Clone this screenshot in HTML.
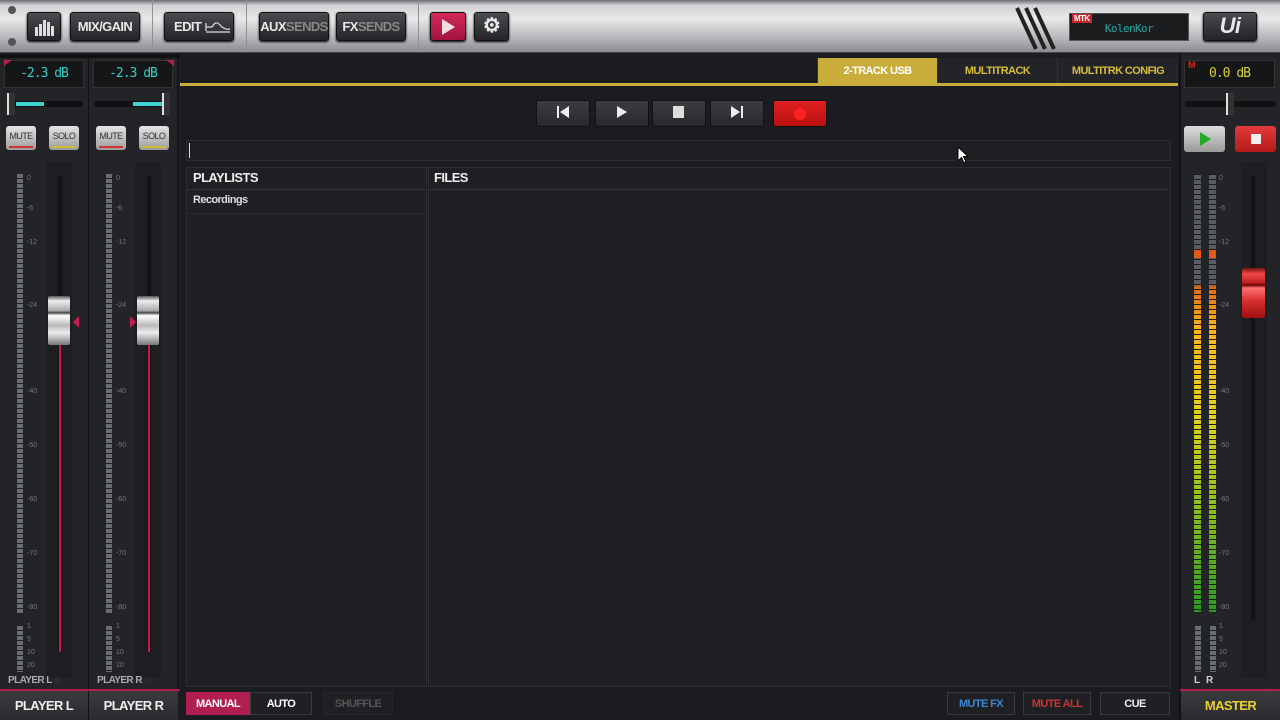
<!DOCTYPE html><html><head><meta charset="utf-8"><style>
*{margin:0;padding:0;box-sizing:border-box}
body{width:1280px;height:720px;background:#1b1c1f;position:relative;overflow:hidden;font-family:"Liberation Sans",sans-serif;font-weight:bold;letter-spacing:-0.6px}
.a{position:absolute}
.top{left:0;top:0;width:1280px;height:53px;background:linear-gradient(#6a6c70 0,#cfd1d3 10%,#e8e9ea 35%,#b9bbbe 70%,#8b8d90 100%);border-bottom:1px solid #444}
.tb{position:absolute;top:12px;height:29px;border-radius:3px;background:linear-gradient(#4a4b4e,#232427);border:1px solid #111;box-shadow:0 1px 2px #000;color:#e8e8e8;font-size:13px;text-align:center;line-height:27px;white-space:nowrap}
.sep{position:absolute;top:0;width:1px;height:52px;background:#8f9194}
.strip{top:54px;height:666px;background:#232428;border-right:1px solid #111}
.db{height:28px;top:6px;background:#151617;border:1px solid #333;color:#33d0c8;font-family:"DejaVu Sans Mono",monospace;font-weight:normal;font-size:13px;text-align:center;line-height:26px;letter-spacing:-1px}
.ms{top:72px;width:30px;height:24px;border-radius:3px;background:linear-gradient(#e4e4e4,#9c9c9c);color:#333;font-size:9px;font-weight:normal;text-align:center;line-height:20px}
.meter{width:6px;background:repeating-linear-gradient(#6a6d70 0 4px,#222 4px 5px)}
.lab{font-size:7px;color:#777;font-weight:normal;letter-spacing:0}
.cap{width:22px;height:49px;border-radius:2px;background:linear-gradient(#555 0,#eee 10%,#aaa 30%,#444 34%,#fff 40%,#bbb 60%,#eee 75%,#777 100%)}
.tr{width:54px;height:27px;top:100px;border-radius:2px;background:linear-gradient(#3c3d40,#28292c);border:1px solid #111;color:#eee;text-align:center;line-height:25px;font-size:14px}
.tab{top:58px;height:26px;color:#d8bc3b;font-size:11px;text-align:center;line-height:26px;background:#232427;border-left:1px solid #333}
.bb{top:692px;height:23px;font-size:11px;text-align:center;line-height:23px;border:1px solid #3a3b3e;background:#1f2023}
</style></head><body>
<div class="a top">
 <div class="a" style="left:8px;top:6px;width:8px;height:8px;border-radius:50%;background:#555"></div>
 <div class="a" style="left:8px;top:38px;width:8px;height:8px;border-radius:50%;background:#555"></div>
 <div class="tb" style="left:27px;width:34px"><svg width="22" height="20" viewBox="0 0 22 20" style="margin-top:4px"><g fill="#ddd"><rect x="2" y="10" width="3" height="9"/><rect x="6" y="7" width="3" height="12"/><rect x="10" y="3" width="3" height="16"/><rect x="14" y="5" width="3" height="14"/><rect x="18" y="9" width="3" height="10"/></g></svg></div>
 <div class="tb" style="left:70px;width:70px">MIX/GAIN</div>
 <div class="sep" style="left:152px"></div>
 <div class="tb" style="left:164px;width:70px;text-align:left;padding-left:9px">EDIT <svg width="28" height="14" style="vertical-align:-2px"><path d="M2 12L2 4M2 8L8 8Q12 1 16 6Q20 11 26 10M2 13L26 13" stroke="#ddd" stroke-width="1.2" fill="none"/></svg></div>
 <div class="sep" style="left:246px"></div>
 <div class="tb" style="left:259px;width:70px">AUX<span style="color:#888">SENDS</span></div>
 <div class="tb" style="left:336px;width:70px">FX<span style="color:#888">SENDS</span></div>
 <div class="sep" style="left:418px"></div>
 <div class="tb" style="left:430px;width:36px;background:linear-gradient(#d22a5a,#a3143e)"><svg width="16" height="18" viewBox="0 0 16 18" style="margin-top:5px"><path d="M2 1L15 9L2 17Z" fill="#f2dde3"/></svg></div>
 <div class="tb" style="left:474px;width:35px;font-size:20px">⚙</div>
 <svg class="a" style="left:1014px;top:5px" width="44" height="46"><g stroke="#222" stroke-width="4"><line x1="3" y1="3" x2="22" y2="44"/><line x1="12" y1="3" x2="31" y2="44"/><line x1="21" y1="3" x2="40" y2="44"/></g></svg>
 <div class="a" style="left:1069px;top:13px;width:120px;height:28px;background:#1b1c1e;border:1px solid #555;color:#2aa8a8;font-size:11px;font-weight:normal;font-family:'DejaVu Sans Mono',monospace;text-align:center;line-height:30px">KolenKor</div>
 <div class="a" style="left:1072px;top:14px;background:#c4262e;color:#fff;font-size:8px;padding:0 2px">MTK</div>
 <div class="tb" style="left:1203px;width:54px;font-size:22px;font-style:italic;line-height:26px">Ui</div>
</div>
<div class="a strip" style="left:0;width:89px"></div>
<div class="a strip" style="left:89px;width:89px"></div>
<div class="a" style="left:0;top:54px;width:180px;height:4px;background:#111"></div>
<div class="a db" style="left:4px;top:60px;width:80px">-2.3 dB</div>
<div class="a db" style="left:93px;top:60px;width:80px">-2.3 dB</div>
<div class="a" style="left:4px;top:60px;border-top:6px solid #b31e4d;border-right:8px solid transparent"></div>
<div class="a" style="left:166px;top:60px;border-top:6px solid #b31e4d;border-left:8px solid transparent"></div>
<div class="a" style="left:10px;top:101px;width:73px;height:6px;background:#111;border-radius:3px"></div>
<div class="a" style="left:16px;top:102px;width:28px;height:4px;background:#3fd0d0"></div>
<div class="a" style="left:7px;top:93px;width:8px;height:22px;background:#333;border-left:2px solid #ddd"></div>
<div class="a" style="left:94px;top:101px;width:73px;height:6px;background:#111;border-radius:3px"></div>
<div class="a" style="left:133px;top:102px;width:30px;height:4px;background:#3fd0d0"></div>
<div class="a" style="left:162px;top:93px;width:8px;height:22px;background:#333;border-left:2px solid #ddd"></div>
<div class="a ms" style="left:6px;top:126px">MUTE<div style="height:2px;margin:0 3px;background:#c33"></div></div>
<div class="a ms" style="left:49px;top:126px">SOLO<div style="height:2px;margin:0 3px;background:#cb3"></div></div>
<div class="a ms" style="left:96px;top:126px">MUTE<div style="height:2px;margin:0 3px;background:#c33"></div></div>
<div class="a ms" style="left:139px;top:126px">SOLO<div style="height:2px;margin:0 3px;background:#cb3"></div></div>
<div class="a meter" style="left:17px;top:174px;height:440px"></div><div class="a meter" style="left:17px;top:626px;height:46px"></div>
<div class="a meter" style="left:106px;top:174px;height:440px"></div><div class="a meter" style="left:106px;top:626px;height:46px"></div>
<div class="a" style="left:46px;top:162px;width:26px;height:516px;background:#1d1e21"></div>
<div class="a" style="left:135px;top:162px;width:26px;height:516px;background:#1d1e21"></div>
<div class="a" style="left:58px;top:176px;width:4px;height:476px;background:#131313"></div>
<div class="a" style="left:147px;top:176px;width:4px;height:476px;background:#131313"></div>
<div class="a" style="left:59px;top:345px;width:2px;height:307px;background:#c31d4f"></div>
<div class="a" style="left:148px;top:345px;width:2px;height:307px;background:#c31d4f"></div>
<div class="a cap" style="left:48px;top:296px"></div>
<div class="a cap" style="left:137px;top:296px"></div>
<div class="a" style="left:73px;top:316px;border-right:6px solid #c31d4f;border-top:6px solid transparent;border-bottom:6px solid transparent"></div>
<div class="a" style="left:130px;top:316px;border-left:6px solid #c31d4f;border-top:6px solid transparent;border-bottom:6px solid transparent"></div>
<div class="a lab" style="left:27px;top:175px">0</div><div class="a lab" style="left:27px;top:205px">-6</div><div class="a lab" style="left:27px;top:239px">-12</div><div class="a lab" style="left:27px;top:302px">-24</div><div class="a lab" style="left:27px;top:388px">-40</div><div class="a lab" style="left:27px;top:442px">-50</div><div class="a lab" style="left:27px;top:496px">-60</div><div class="a lab" style="left:27px;top:550px">-70</div><div class="a lab" style="left:27px;top:604px">-80</div><div class="a lab" style="left:27px;top:623px">1</div><div class="a lab" style="left:27px;top:636px">5</div><div class="a lab" style="left:27px;top:649px">10</div><div class="a lab" style="left:27px;top:662px">20</div>
<div class="a lab" style="left:116px;top:175px">0</div><div class="a lab" style="left:116px;top:205px">-6</div><div class="a lab" style="left:116px;top:239px">-12</div><div class="a lab" style="left:116px;top:302px">-24</div><div class="a lab" style="left:116px;top:388px">-40</div><div class="a lab" style="left:116px;top:442px">-50</div><div class="a lab" style="left:116px;top:496px">-60</div><div class="a lab" style="left:116px;top:550px">-70</div><div class="a lab" style="left:116px;top:604px">-80</div><div class="a lab" style="left:116px;top:623px">1</div><div class="a lab" style="left:116px;top:636px">5</div><div class="a lab" style="left:116px;top:649px">10</div><div class="a lab" style="left:116px;top:662px">20</div>
<div class="a" style="left:8px;top:675px;font-size:10px;color:#aaa">PLAYER L <span style="color:#666">◌</span></div>
<div class="a" style="left:97px;top:675px;font-size:10px;color:#aaa">PLAYER R <span style="color:#666">◌</span></div>
<div class="a" style="left:0;top:689px;width:180px;height:2px;background:#b31e4d"></div>
<div class="a" style="left:0;top:691px;width:88px;height:29px;background:linear-gradient(#3a3b3e,#2a2b2e);color:#eee;font-size:13px;text-align:center;line-height:29px">PLAYER L</div>
<div class="a" style="left:89px;top:691px;width:89px;height:29px;background:linear-gradient(#3a3b3e,#2a2b2e);color:#eee;font-size:13px;text-align:center;line-height:29px">PLAYER R</div>
<div class="a tab" style="left:817px;width:120px;background:#c9ad3a;color:#fff">2-TRACK USB</div>
<div class="a tab" style="left:937px;width:120px">MULTITRACK</div>
<div class="a tab" style="left:1057px;width:121px">MULTITRK CONFIG</div>
<div class="a" style="left:180px;top:83px;width:998px;height:3px;background:#c9ad3a"></div>
<div class="a tr" style="left:536px"><svg width="14" height="12"><rect x="1" y="0" width="2" height="12" fill="#eee"/><path d="M13 0L4 6L13 12Z" fill="#eee"/></svg></div>
<div class="a tr" style="left:595px"><svg width="12" height="12"><path d="M1 0L11 6L1 12Z" fill="#eee"/></svg></div>
<div class="a tr" style="left:652px"><svg width="12" height="12"><rect width="11" height="12" fill="#ddd"/></svg></div>
<div class="a tr" style="left:710px"><svg width="14" height="12"><path d="M1 0L10 6L1 12Z" fill="#eee"/><rect x="11" y="0" width="2" height="12" fill="#eee"/></svg></div>
<div class="a tr" style="left:773px;background:linear-gradient(#e02222,#b81010)"><div style="width:12px;height:12px;border-radius:50%;background:#f22;margin:7px auto"></div></div>
<div class="a" style="left:186px;top:140px;width:985px;height:21px;background:#1e1f22;border:1px solid #2b2c2f"></div>
<div class="a" style="left:189px;top:143px;width:1px;height:15px;background:#ddd"></div>
<div class="a" style="left:186px;top:167px;width:241px;height:520px;background:#1f2023;border:1px solid #2e2f32"></div>
<div class="a" style="left:428px;top:167px;width:743px;height:520px;background:#1f2023;border:1px solid #2e2f32"></div>
<div class="a" style="left:187px;top:189px;width:239px;height:1px;background:#333"></div>
<div class="a" style="left:429px;top:189px;width:741px;height:1px;background:#333"></div>
<div class="a" style="left:187px;top:213px;width:239px;height:1px;background:#2d2e31"></div>
<div class="a" style="left:193px;top:170px;color:#eee;font-size:13px">PLAYLISTS</div>
<div class="a" style="left:434px;top:170px;color:#eee;font-size:13px">FILES</div>
<div class="a" style="left:193px;top:194px;color:#ddd;font-size:11px">Recordings</div>
<svg class="a" style="left:957px;top:146px" width="12" height="18"><path d="M1 1L1 15L4.5 11.5L7 17L9 16L6.5 10.5L11 10.5Z" fill="#fff" stroke="#000" stroke-width="1"/></svg>
<div class="a bb" style="left:186px;width:64px;background:#b01f4f;color:#fff;border-color:#b01f4f">MANUAL</div>
<div class="a bb" style="left:250px;width:62px;color:#fff">AUTO</div>
<div class="a bb" style="left:323px;width:70px;color:#555;border-color:#26272a">SHUFFLE</div>
<div class="a bb" style="left:947px;width:68px;color:#3a86cf">MUTE FX</div>
<div class="a bb" style="left:1023px;width:68px;color:#c33">MUTE ALL</div>
<div class="a bb" style="left:1100px;width:70px;color:#eee">CUE</div>
<div class="a" style="left:1179px;top:54px;width:101px;height:666px;background:#232428;border-left:2px solid #111"></div>
<div class="a db" style="left:1184px;top:60px;width:91px;color:#d8d33a">0.0 dB</div>
<div class="a" style="left:1188px;top:60px;color:#d22;font-size:9px">M</div>
<div class="a" style="left:1185px;top:101px;width:91px;height:6px;background:#111;border-radius:3px"></div>
<div class="a" style="left:1226px;top:93px;width:8px;height:22px;background:#333;border-left:2px solid #ddd"></div>
<div class="a" style="left:1184px;top:126px;width:41px;height:26px;border-radius:3px;background:linear-gradient(#ddd,#999)"><svg width="41" height="26"><path d="M16 6L27 13L16 20Z" fill="#2a2"/></svg></div>
<div class="a" style="left:1235px;top:126px;width:41px;height:26px;border-radius:3px;background:linear-gradient(#e23a3a,#b31a1a)"><div style="width:10px;height:10px;background:#eee;margin:8px auto"></div></div>
<div class="a" style="left:1194px;top:174px;width:7px;height:438px;background:repeating-linear-gradient(#1a1a1a 0 1px,transparent 1px 5px),linear-gradient(#5a5d60 0,#5a5d60 25%,#e06a1a 26%,#ffb020 35%,#e0d020 55%,#8ec020 75%,#2a9a20 100%)"></div>
<div class="a" style="left:1209px;top:174px;width:7px;height:438px;background:repeating-linear-gradient(#1a1a1a 0 1px,transparent 1px 5px),linear-gradient(#5a5d60 0,#5a5d60 25%,#e06a1a 26%,#ffb020 35%,#e0d020 55%,#8ec020 75%,#2a9a20 100%)"></div>
<div class="a meter" style="left:1195px;top:626px;height:46px"></div><div class="a meter" style="left:1210px;top:626px;height:46px"></div>
<div class="a" style="left:1194px;top:250px;width:22px;height:8px;background:repeating-linear-gradient(90deg,#e05a1a 0 7px,transparent 7px 15px)"></div>
<div class="a" style="left:1241px;top:162px;width:26px;height:516px;background:#1d1e21"></div>
<div class="a" style="left:1251px;top:176px;width:4px;height:444px;background:#131313"></div>
<div class="a" style="left:1242px;top:268px;width:23px;height:50px;border-radius:2px;background:linear-gradient(#7a1010 0,#f04848 12%,#c02020 30%,#600 34%,#ff7070 40%,#d83030 65%,#a01010 100%)"></div>
<div class="a lab" style="left:1219px;top:175px">0</div><div class="a lab" style="left:1219px;top:205px">-6</div><div class="a lab" style="left:1219px;top:239px">-12</div><div class="a lab" style="left:1219px;top:302px">-24</div><div class="a lab" style="left:1219px;top:388px">-40</div><div class="a lab" style="left:1219px;top:442px">-50</div><div class="a lab" style="left:1219px;top:496px">-60</div><div class="a lab" style="left:1219px;top:550px">-70</div><div class="a lab" style="left:1219px;top:604px">-80</div><div class="a lab" style="left:1219px;top:623px">1</div><div class="a lab" style="left:1219px;top:636px">5</div><div class="a lab" style="left:1219px;top:649px">10</div><div class="a lab" style="left:1219px;top:662px">20</div>
<div class="a" style="left:1194px;top:675px;font-size:10px;color:#ccc">L&nbsp;&nbsp;&nbsp;R</div>
<div class="a" style="left:1180px;top:689px;width:100px;height:2px;background:#b31e4d"></div>
<div class="a" style="left:1181px;top:691px;width:99px;height:29px;background:linear-gradient(#3a3b3e,#2a2b2e);color:#e8d030;font-size:13px;text-align:center;line-height:29px">MASTER</div>
</body></html>
